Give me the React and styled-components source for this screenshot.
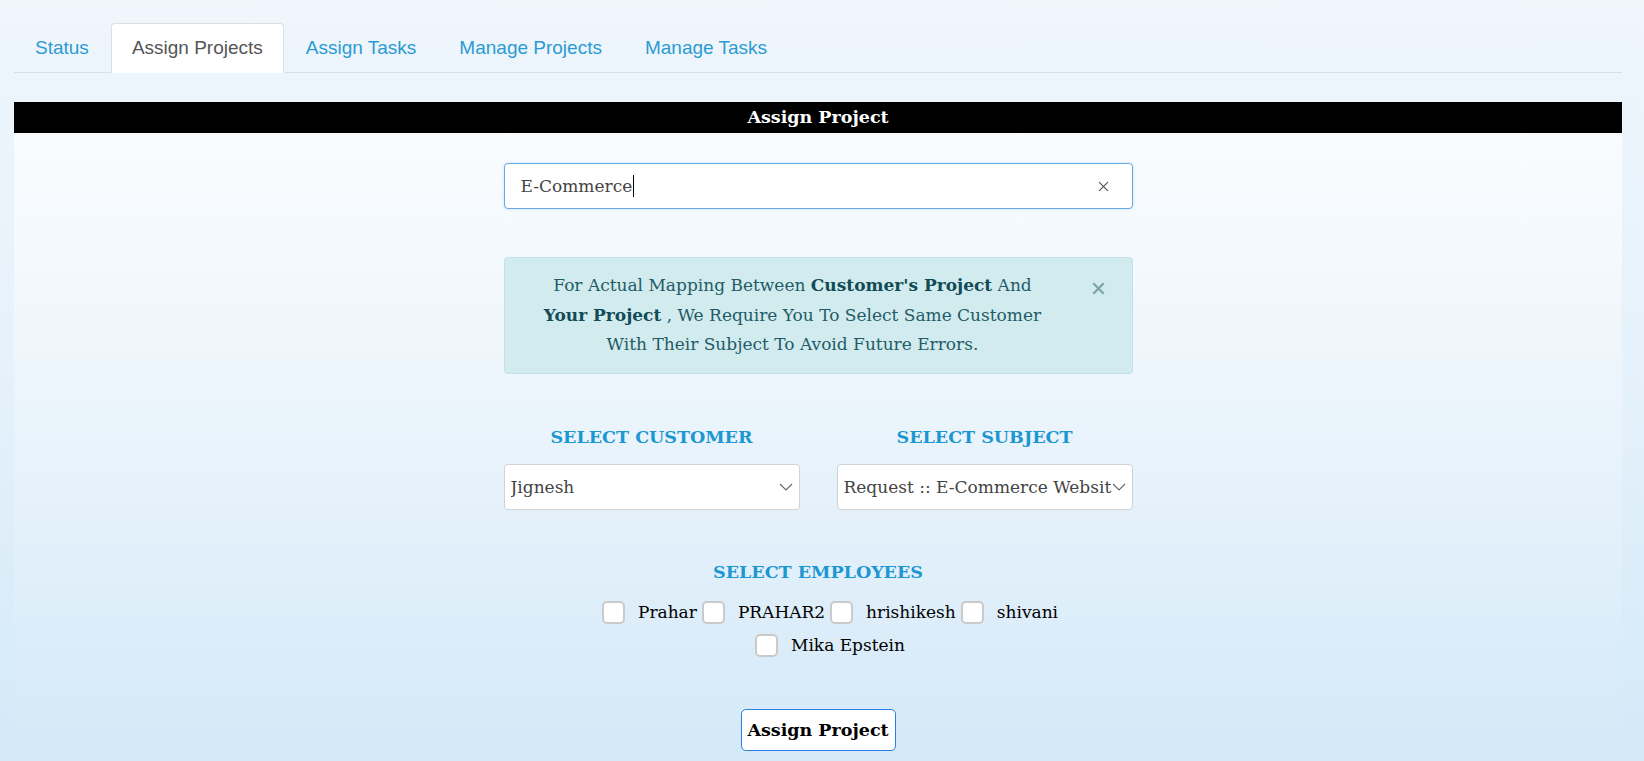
import React from "react";
import styled, { createGlobalStyle } from "styled-components";

const GlobalStyle = createGlobalStyle`
  html, body {
    margin: 0;
    padding: 0;
  }
  body {
    min-height: 100vh;
    background: linear-gradient(180deg, #eff6fc 0%, #e6f2fb 45%, #d3e9f8 100%);
    font-family: "DejaVu Serif", Georgia, serif;
  }
`;

const Page = styled.div`
  padding: 0 22px 10px 14px;
`;

const TabBar = styled.ul`
  display: flex;
  margin: 0;
  padding: 23px 0 0 0;
  list-style: none;
  border-bottom: 1px solid #dcdfe2;
`;

const Tab = styled.li`
  height: 48px;
  line-height: 48px;
  padding: 0 20px;
  margin-right: 1px;
  margin-bottom: -1px;
  font-family: "Liberation Sans", Arial, sans-serif;
  font-size: 19px;
  color: ${(p) => (p.$active ? "#555" : "#2b9bd3")};
  background: ${(p) => (p.$active ? "#fff" : "transparent")};
  border: 1px solid ${(p) => (p.$active ? "#dcdfe2" : "transparent")};
  border-bottom-color: transparent;
  border-radius: 4px 4px 0 0;
  cursor: pointer;
`;

const Card = styled.div`
  margin-top: 29px;
  background: linear-gradient(180deg, #fbfdff 0%, #eef6fc 40%, #d4e9f8 100%);
  border-radius: 0 0 20px 20px;
  padding-bottom: 1px;
`;

const HeaderBar = styled.div`
  height: 31px;
  line-height: 31px;
  background: #000;
  color: #fff;
  text-align: center;
  font-weight: bold;
  font-size: 17.5px;
`;

const Column = styled.div`
  width: 629px;
  margin: 0 auto;
  display: flex;
  flex-direction: column;
  align-items: center;
`;

const SearchBox = styled.div`
  box-sizing: border-box;
  width: 100%;
  height: 46px;
  margin-top: 30px;
  display: flex;
  align-items: center;
  padding: 0 23px 0 16px;
  background: #fff;
  border: 1px solid #66a9e6;
  border-radius: 4px;
  box-shadow: 0 0 3px rgba(102, 169, 230, 0.35);
  font-size: 17px;
  color: #444;
`;

const SearchText = styled.span`
  flex: 1;
  display: flex;
  align-items: center;
`;

const Caret = styled.span`
  display: inline-block;
  width: 1px;
  height: 22px;
  background: #000;
  margin-left: 1px;
`;

const Alert = styled.div`
  position: relative;
  box-sizing: border-box;
  width: 100%;
  margin-top: 48px;
  padding: 13px 71px 13px 20px;
  background: #d2ebee;
  border: 1px solid #c1e3e9;
  border-radius: 4px;
  color: #1f5c67;
  font-size: 17px;
  line-height: 29.5px;
  text-align: center;

  b {
    color: #124b56;
  }
`;

const CloseBtn = styled.span`
  position: absolute;
  top: 24px;
  right: 27px;
  display: flex;
`;

const SelectRow = styled.div`
  display: grid;
  grid-template-columns: 296px 296px;
  column-gap: 37px;
  margin-top: 50px;
`;

const Field = styled.div`
  display: flex;
  flex-direction: column;
  align-items: stretch;
`;

const Label = styled.div`
  text-align: center;
  font-weight: bold;
  font-size: 17.5px;
  line-height: 26px;
  color: #1c97d2;
  text-transform: uppercase;
  margin-bottom: ${(p) => p.$gap || "14px"};
`;

const SelectBox = styled.div`
  box-sizing: border-box;
  height: 46px;
  display: flex;
  align-items: center;
  padding: 0 6px 0 6px;
  background: #fff;
  border: 1px solid #cfd3d8;
  border-radius: 4px;
  font-size: 17px;
  color: #444;
`;

const SelectValue = styled.span`
  flex: 1;
  overflow: hidden;
  white-space: nowrap;
`;

const Employees = styled.div`
  margin-top: 49px;
  width: 100%;
  display: flex;
  flex-direction: column;
  align-items: center;
`;

const CheckGroup = styled.div`
  box-sizing: border-box;
  width: 500px;
  padding-left: 24px;
  display: flex;
  flex-wrap: wrap;
  justify-content: center;
  column-gap: 5px;
  margin-top: 11px;
`;

const CheckItem = styled.label`
  height: 33px;
  display: flex;
  align-items: center;
  font-size: 17px;
  color: #000;
`;

const Box = styled.span`
  box-sizing: border-box;
  width: 23px;
  height: 23px;
  margin-right: 13px;
  background: #fff;
  border: 2px solid #cacaca;
  border-radius: 5px;
`;

const AssignButton = styled.button`
  margin-top: 47px;
  width: 155px;
  height: 42px;
  padding: 0;
  background: #fff;
  border: 1px solid #2a7fe4;
  border-radius: 5px;
  font-family: "DejaVu Serif", Georgia, serif;
  font-weight: bold;
  font-size: 17.5px;
  color: #000;
  cursor: pointer;
`;

const Chevron = () => (
  <svg width="14" height="8" viewBox="0 0 14 8">
    <path d="M1 1 L7 7 L13 1" fill="none" stroke="#666" strokeWidth="1.1" />
  </svg>
);

const XIcon = ({ size, color, width }) => (
  <svg width={size} height={size} viewBox="0 0 10 10">
    <path d="M1 1 L9 9 M9 1 L1 9" stroke={color} strokeWidth={width} fill="none" />
  </svg>
);

const tabs = ["Status", "Assign Projects", "Assign Tasks", "Manage Projects", "Manage Tasks"];
const employees = ["Prahar", "PRAHAR2", "hrishikesh", "shivani", "Mika Epstein"];

export default function App() {
  return (
    <>
      <GlobalStyle />
      <Page>
        <TabBar>
          {tabs.map((t) => (
            <Tab key={t} $active={t === "Assign Projects"}>
              {t}
            </Tab>
          ))}
        </TabBar>
        <Card>
          <HeaderBar>Assign Project</HeaderBar>
          <Column>
            <SearchBox>
              <SearchText>
                E-Commerce
                <Caret />
              </SearchText>
              <XIcon size={11} color="#555" width={1.1} />
            </SearchBox>

            <Alert>
              For Actual Mapping Between <b>Customer's Project</b> And
              <br />
              <b>Your Project</b> , We Require You To Select Same Customer
              <br />
              With Their Subject To Avoid Future Errors.
              <CloseBtn>
                <XIcon size={13} color="#7ba3aa" width={1.7} />
              </CloseBtn>
            </Alert>

            <SelectRow>
              <Field>
                <Label>Select Customer</Label>
                <SelectBox>
                  <SelectValue>Jignesh</SelectValue>
                  <Chevron />
                </SelectBox>
              </Field>
              <Field>
                <Label>Select Subject</Label>
                <SelectBox>
                  <SelectValue>Request :: E-Commerce Website</SelectValue>
                  <Chevron />
                </SelectBox>
              </Field>
            </SelectRow>

            <Employees>
              <Label $gap="0">Select Employees</Label>
              <CheckGroup>
                {employees.map((e) => (
                  <CheckItem key={e}>
                    <Box />
                    {e}
                  </CheckItem>
                ))}
              </CheckGroup>
            </Employees>

            <AssignButton>Assign Project</AssignButton>
          </Column>
        </Card>
      </Page>
    </>
  );
}
